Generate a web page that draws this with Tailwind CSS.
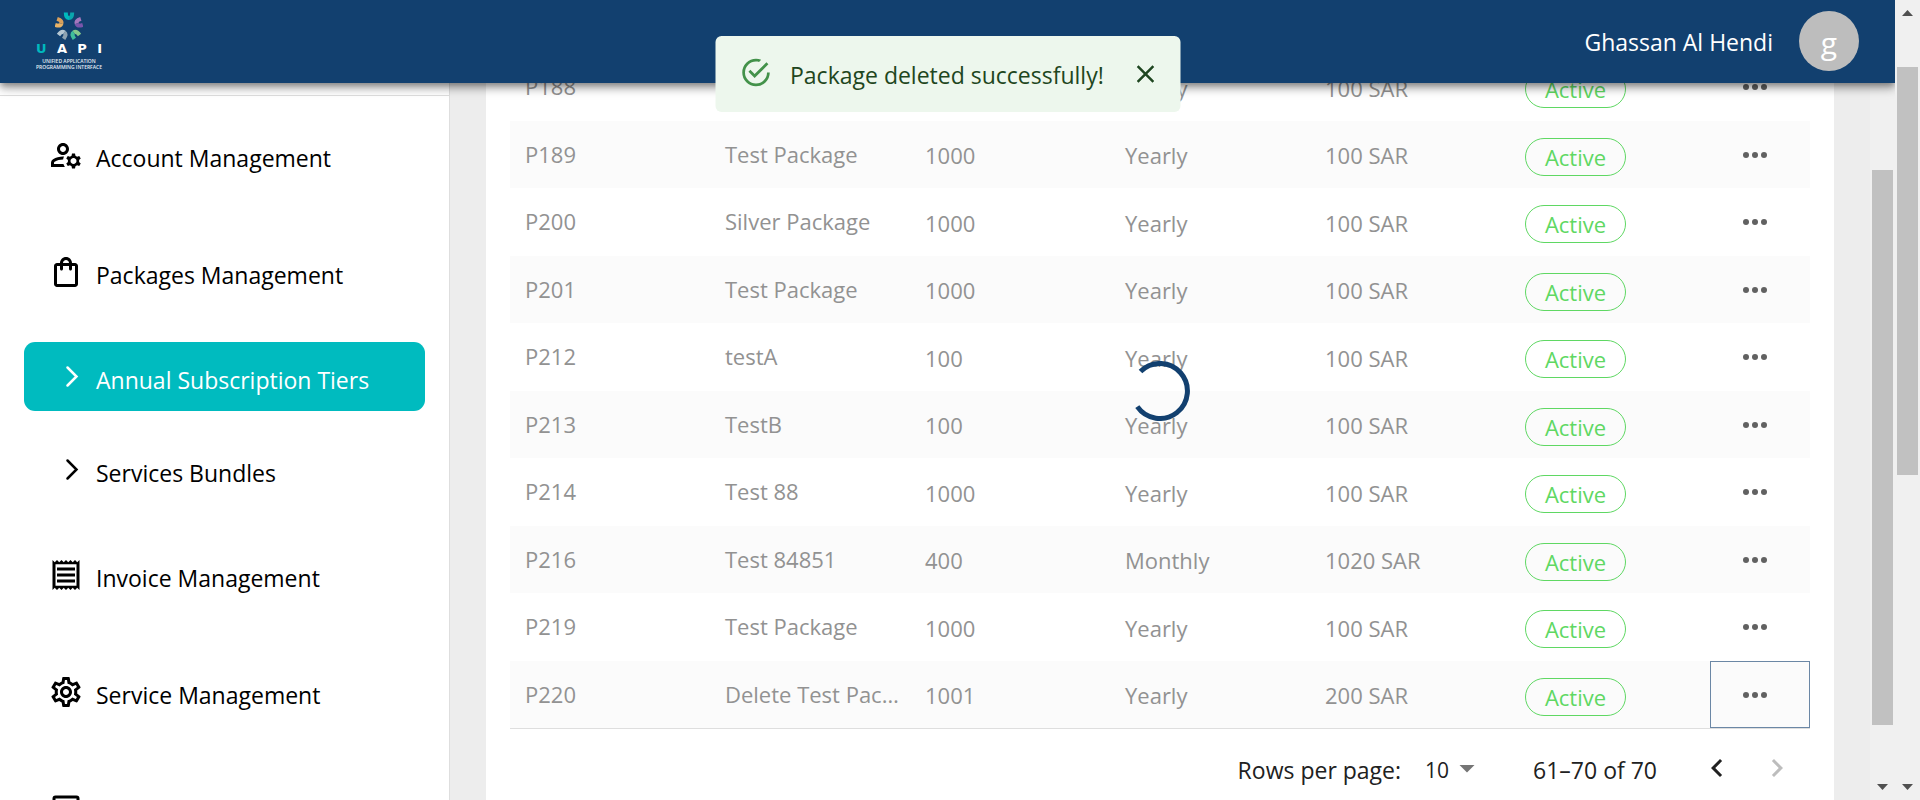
<!DOCTYPE html>
<html lang="en">
<head>
<meta charset="utf-8">
<title>UAPI - Annual Subscription Tiers</title>
<script src="https://cdn.jsdelivr.net/npm/@tailwindcss/browser@4"></script>
</head>
<body class="h-screen overflow-hidden bg-[#ededed] font-['Open_Sans','Noto_Sans',sans-serif] text-[23px] leading-[30px] text-[#212121]">
<div class="flex h-full">
  <div class="relative flex h-full min-w-0 flex-1 flex-col overflow-hidden">

    <header class="relative z-10 flex h-[83px] shrink-0 items-center justify-between bg-[#12406f] pr-9 pb-px pl-9 text-white shadow-[0_3px_6px_-1px_rgba(0,0,0,0.3),0_6px_8px_0_rgba(0,0,0,0.2),0_2px_15px_0_rgba(0,0,0,0.16)]">
      <a href="#" class="flex w-[66px] flex-col items-center" aria-label="UAPI home">
        <svg class="h-[28px] w-[28px]" viewBox="-14 -14 28 28" fill="none" stroke-width="4" stroke-linecap="butt">
          <g><path d="M-3.2 -13.5C-3.2 -10 -2.2 -8 0 -8" stroke="#00b9bd"/><path d="M3.2 -13.5C3.2 -10 2.2 -8 0 -8" stroke="#0aa6ad"/></g>
          <g transform="rotate(72)"><path d="M-3.2 -13.5C-3.2 -10 -2.2 -8 0 -8" stroke="#a477bd"/><path d="M3.2 -13.5C3.2 -10 2.2 -8 0 -8" stroke="#7a55ab"/></g>
          <g transform="rotate(144)"><path d="M-3.2 -13.5C-3.2 -10 -2.2 -8 0 -8" stroke="#84c98b"/><path d="M3.2 -13.5C3.2 -10 2.2 -8 0 -8" stroke="#3fbf9b"/></g>
          <g transform="rotate(216)"><path d="M-3.2 -13.5C-3.2 -10 -2.2 -8 0 -8" stroke="#8ea3b2"/><path d="M3.2 -13.5C3.2 -10 2.2 -8 0 -8" stroke="#b4c6d2"/></g>
          <g transform="rotate(288)"><path d="M-3.2 -13.5C-3.2 -10 -2.2 -8 0 -8" stroke="#e9b366"/><path d="M3.2 -13.5C3.2 -10 2.2 -8 0 -8" stroke="#d9a05c"/></g>
        </svg>
        <span class="mt-[3px] flex w-full justify-between font-['DejaVu_Sans',sans-serif] text-[13px] leading-[12px] font-bold"><span class="text-[#00b9bd]">U</span><span>A</span><span>P</span><span>I</span></span>
        <span class="mt-[3px] text-center text-[5px] leading-[6px] font-semibold whitespace-nowrap text-[#e6eef5]">UNIFIED APPLICATION<br>PROGRAMMING INTERFACE</span>
      </a>
      <div class="flex items-center gap-[26px]">
        <span class="pt-[2px]">Ghassan Al Hendi</span>
        <button type="button" class="flex size-[60px] items-center justify-center rounded-full bg-[#bdbdbd] pt-1 text-[30px] leading-[30px]">g</button>
      </div>
    </header>

    <div class="flex min-h-0 flex-1">
      <nav class="w-[450px] shrink-0 overflow-hidden border-r border-[#dedede] bg-white px-6 text-black">
        <hr class="-mx-6 mt-3 border-[#dedede]">
        <ul class="mt-6 flex flex-col gap-12">
          <li><a href="#" class="flex h-[69px] items-center gap-3 rounded-[11px] pl-6">
            <svg class="size-9" viewBox="0 0 24 24" fill="currentColor"><path d="M4 18v-.65c0-.34.16-.66.41-.81C6.1 15.53 8.03 15 10 15c.03 0 .05 0 .08.01.1-.7.3-1.37.59-1.98-.22-.02-.44-.03-.67-.03-2.42 0-4.68.67-6.61 1.82-.88.52-1.39 1.5-1.39 2.53V20h9.26c-.42-.6-.75-1.28-.97-2H4zM10 12c2.21 0 4-1.79 4-4s-1.79-4-4-4-4 1.79-4 4 1.79 4 4 4zm0-6c1.1 0 2 .9 2 2s-.9 2-2 2-2-.9-2-2 .9-2 2-2zM20.75 16c0-.22-.03-.42-.06-.63l1.14-1.01-1-1.73-1.45.49c-.32-.27-.68-.48-1.08-.63L18 11h-2l-.3 1.49c-.4.15-.76.36-1.08.63l-1.45-.49-1 1.73 1.14 1.01c-.03.21-.06.41-.06.63s.03.42.06.63l-1.14 1.01 1 1.73 1.45-.49c.32.27.68.48 1.08.63L16 21h2l.3-1.49c.4-.15.76-.36 1.08-.63l1.45.49 1-1.73-1.14-1.01c.03-.21.06-.41.06-.63zM17 18c-1.1 0-2-.9-2-2s.9-2 2-2 2 .9 2 2-.9 2-2 2z"/></svg>
            <span class="pt-[6px]">Account Management</span></a></li>
          <li><a href="#" class="flex h-[69px] items-center gap-3 rounded-[11px] pl-6">
            <svg class="size-9" viewBox="0 0 24 24" fill="currentColor"><path d="M18 6h-2c0-2.21-1.79-4-4-4S8 3.79 8 6H6c-1.1 0-2 .9-2 2v12c0 1.1.9 2 2 2h12c1.1 0 2-.9 2-2V8c0-1.1-.9-2-2-2zm-6-2c1.1 0 2 .9 2 2h-4c0-1.1.9-2 2-2zm6 16H6V8h2v2c0 .55.45 1 1 1s1-.45 1-1V8h4v2c0 .55.45 1 1 1s1-.45 1-1V8h2v12z"/></svg>
            <span class="pt-[6px]">Packages Management</span></a></li>
          <li class="-my-3"><ul class="flex flex-col gap-6">
            <li><a href="#" aria-current="page" class="flex h-[69px] items-center gap-3 rounded-[11px] bg-[#00bbbf] pl-6 text-white">
              <svg class="size-9" viewBox="0 0 36 36" fill="none" stroke="currentColor" stroke-width="2.5" stroke-linecap="round"><path d="M19.500 8.500L28.500 17.500L19.500 26.500"/></svg>
              <span class="pt-[6px]">Annual Subscription Tiers</span></a></li>
            <li><a href="#" class="flex h-[69px] items-center gap-3 rounded-[11px] pl-6">
              <svg class="size-9" viewBox="0 0 36 36" fill="none" stroke="currentColor" stroke-width="2.5" stroke-linecap="round"><path d="M19.500 8.500L28.500 17.500L19.500 26.500"/></svg>
              <span class="pt-[6px]">Services Bundles</span></a></li>
          </ul></li>
          <li><a href="#" class="flex h-[69px] items-center gap-3 rounded-[11px] pl-6">
            <svg class="size-9" viewBox="0 0 24 24" fill="currentColor"><path d="M19.500 3.500 18 2l-1.500 1.500L15 2l-1.500 1.500L12 2l-1.500 1.500L9 2 7.500 3.500 6 2 4.500 3.500 3 2v20l1.500-1.500L6 22l1.500-1.500L9 22l1.500-1.500L12 22l1.500-1.500L15 22l1.500-1.500L18 22l1.500-1.500L21 22V2l-1.500 1.500zM19 19.090H5V4.910h14v14.180zM6 15h12v2H6zm0-4h12v2H6zm0-4h12v2H6z"/></svg>
            <span class="pt-[6px]">Invoice Management</span></a></li>
          <li><a href="#" class="flex h-[69px] items-center gap-3 rounded-[11px] pl-6">
            <svg class="size-9" viewBox="0 0 24 24" fill="currentColor"><path d="M19.430 12.980c.04-.32.07-.64.07-.98 0-.34-.03-.66-.07-.98l2.110-1.650c.19-.15.24-.42.12-.64l-2-3.460c-.09-.16-.26-.25-.44-.25-.06 0-.12.01-.17.03l-2.490 1c-.52-.4-1.080-.73-1.690-.98l-.38-2.650C14.460 2.180 14.250 2 14 2h-4c-.25 0-.46.18-.49.42l-.38 2.650c-.61.25-1.170.59-1.690.98l-2.490-1c-.06-.02-.12-.03-.18-.03-.17 0-.34.09-.43.25l-2 3.460c-.13.22-.07.49.12.64l2.110 1.650c-.04.32-.07.65-.07.98 0 .33.03.66.07.98l-2.110 1.650c-.19.15-.24.42-.12.64l2 3.460c.09.16.26.25.44.25.06 0 .12-.01.17-.03l2.490-1c.52.4 1.080.73 1.690.98l.38 2.650c.03.24.24.42.49.42h4c.25 0 .46-.18.49-.42l.38-2.650c.61-.25 1.170-.59 1.690-.98l2.490 1c.06.02.12.03.18.03.17 0 .34-.09.43-.25l2-3.460c.12-.22.07-.49-.12-.64l-2.110-1.650zm-1.980-1.710c.04.31.05.52.05.73 0 .21-.02.43-.05.73l-.14 1.130.89.7 1.080.84-.7 1.210-1.270-.51-1.040-.42-.9.68c-.43.32-.84.56-1.250.73l-1.060.43-.16 1.130-.2 1.350h-1.400l-.19-1.350-.16-1.130-1.060-.43c-.43-.18-.83-.41-1.230-.71l-.91-.7-1.060.43-1.270.51-.7-1.210 1.080-.84.89-.7-.14-1.130c-.03-.31-.05-.54-.05-.74s.02-.43.05-.73l.14-1.130-.89-.7-1.080-.84.7-1.210 1.270.51 1.040.42.9-.68c.43-.32.84-.56 1.250-.73l1.060-.43.16-1.130.2-1.350h1.390l.19 1.350.16 1.130 1.060.43c.43.18.83.41 1.230.71l.91.7 1.060-.43 1.270-.51.7 1.210-1.070.85-.89.7.14 1.130zM12 8c-2.210 0-4 1.790-4 4s1.790 4 4 4 4-1.790 4-4-1.790-4-4-4zm0 6c-1.100 0-2-.9-2-2s.9-2 2-2 2 .9 2 2-.9 2-2 2z"/></svg>
            <span class="pt-[6px]">Service Management</span></a></li>
          <li><a href="#" class="flex h-[69px] items-center gap-3 rounded-[11px] pl-6" aria-label="More">
            <svg class="size-9" viewBox="0 0 24 24" fill="none" stroke="currentColor" stroke-width="2"><rect x="4" y="4" width="16" height="16" rx="1"/></svg></a></li>
        </ul>
      </nav>

      <main class="relative min-w-0 flex-1 px-9">
        <section class="-mt-[30px] h-[calc(100%+30px)] bg-white px-6">
          <table class="w-full table-fixed border-b border-[#dedede] text-left text-[22px] text-[#929292]">
            <colgroup><col><col><col><col><col><col><col class="w-[100px]"></colgroup>
            <tbody id="packages"></tbody>
          </table>
          <div class="flex items-center justify-end pt-[17px] pr-[11px]">
            <label for="rows" class="pt-1">Rows per page:</label>
            <div class="relative ml-6 flex items-center">
              <select id="rows" class="h-9 w-[60px] appearance-none bg-transparent pt-1 text-[21px]"><option>10</option><option>25</option><option>50</option></select>
              <svg class="pointer-events-none absolute right-0 size-9" viewBox="0 0 24 24" fill="#757575"><path d="M7 10l5 5 5-5z"/></svg>
            </div>
            <span class="ml-12 pt-1">61–70 of 70</span>
            <button type="button" aria-label="Previous page" class="ml-[38px] p-1"><svg class="size-9" viewBox="0 0 24 24" fill="currentColor"><path d="M15.410 16.590 10.830 12l4.580-4.590L14 6l-6 6 6 6z"/></svg></button>
            <button type="button" aria-label="Next page" disabled class="ml-4 p-1 text-[#bdbdbd]"><svg class="size-9" viewBox="0 0 24 24" fill="currentColor"><path d="M8.590 16.590 13.170 12 8.590 7.410 10 6l6 6-6 6z"/></svg></button>
          </div>
        </section>
        <svg role="progressbar" aria-label="Loading" class="absolute top-[278px] left-1/2 size-[60px] -translate-x-1/2" viewBox="-30 -30 60 60" fill="none" stroke="#12406f" stroke-width="5"><path d="M-19.500 -19.500A27.500 27.500 0 1 1 -22.700 15.600"/></svg>
      </main>

      <div class="flex w-[25px] shrink-0 flex-col items-center justify-between bg-[#f0f0f0] pt-[87px] pb-[10px]" aria-hidden="true">
        <div class="h-[555px] w-[21px] bg-[#c1c1c1]"></div>
        <svg class="h-[6px] w-[11px]" viewBox="0 0 11 6" fill="#505050"><path d="M0 0h11L5.500 6z"/></svg>
      </div>
    </div>

    <div role="alert" class="absolute top-9 left-1/2 z-20 flex h-[76px] w-[465px] -translate-x-1/2 items-center rounded-[6px] bg-[#edf7ed] px-6 text-[#1e4620]">
      <svg class="mb-1 size-[33px]" viewBox="0 0 24 24" fill="#43924a"><path d="M20,12A8,8 0 0,1 12,20A8,8 0 0,1 4,12A8,8 0 0,1 12,4C12.760,4 13.500,4.110 14.200,4.310L15.770,2.740C14.610,2.260 13.340,2 12,2A10,10 0 0,0 2,12A10,10 0 0,0 12,22A10,10 0 0,0 22,12M7.910,10.080L6.500,11.500L11,16L21,6L19.590,4.580L11,13.170L7.910,10.080Z"/></svg>
      <span class="ml-[18px] flex-1 pt-[2px] whitespace-nowrap">Package deleted successfully!</span>
      <button type="button" aria-label="Close" class="-mr-1"><svg class="size-[30px]" viewBox="0 0 24 24" fill="currentColor"><path d="M19 6.410L17.590 5 12 10.590 6.410 5 5 6.410 10.590 12 5 17.590 6.410 19 12 13.410 17.590 19 19 17.590 13.410 12z"/></svg></button>
    </div>
  </div>

  <div class="flex w-[25px] shrink-0 flex-col items-center bg-[#f0f0f0] py-[10px]" aria-hidden="true">
    <svg class="h-[6px] w-[11px]" viewBox="0 0 11 6" fill="#505050"><path d="M0 6h11L5.500 0z"/></svg>
    <div class="mt-[51px] h-[408px] w-[21px] bg-[#c1c1c1]"></div>
    <svg class="mt-auto h-[6px] w-[11px]" viewBox="0 0 11 6" fill="#505050"><path d="M0 0h11L5.500 6z"/></svg>
  </div>
</div>
<script>
  const packages = [
    ['P188', 'Test Package', '1000', 'Yearly', '100 SAR'],
    ['P189', 'Test Package', '1000', 'Yearly', '100 SAR'],
    ['P200', 'Silver Package', '1000', 'Yearly', '100 SAR'],
    ['P201', 'Test Package', '1000', 'Yearly', '100 SAR'],
    ['P212', 'testA', '100', 'Yearly', '100 SAR'],
    ['P213', 'TestB', '100', 'Yearly', '100 SAR'],
    ['P214', 'Test 88', '1000', 'Yearly', '100 SAR'],
    ['P216', 'Test 84851', '400', 'Monthly', '1020 SAR'],
    ['P219', 'Test Package', '1000', 'Yearly', '100 SAR'],
    ['P220', 'Delete Test Package', '1001', 'Yearly', '200 SAR'],
  ];
  document.getElementById('packages').innerHTML = packages.map(([id, name, limit, period, price]) => `
    <tr class="group h-[67px] odd:h-[68px] even:bg-[#fbfbfb]">
      <td class="px-[15px] pb-[2px]">${id}</td>
      <td class="truncate pr-2 pb-[2px] pl-[15px]">${name}</td>
      <td class="px-[15px] pt-px">${limit}</td>
      <td class="px-[15px] pt-px">${period}</td>
      <td class="px-[15px] pt-px">${price}</td>
      <td class="px-[15px] pt-1"><span class="flex h-[38px] w-[101px] items-center justify-center rounded-[19px] border border-[#5fd863] text-[#5fd863]">Active</span></td>
      <td class="p-0"><button type="button" aria-label="Actions for ${id}" class="flex h-[67px] w-full items-center border border-transparent pl-[26px] text-[#616161] group-last:border-[#6b87a5]"><svg class="size-9" viewBox="0 0 24 24" fill="currentColor"><circle cx="6" cy="12" r="2"/><circle cx="12" cy="12" r="2"/><circle cx="18" cy="12" r="2"/></svg></button></td>
    </tr>`).join('');
</script>
</body>
</html>
